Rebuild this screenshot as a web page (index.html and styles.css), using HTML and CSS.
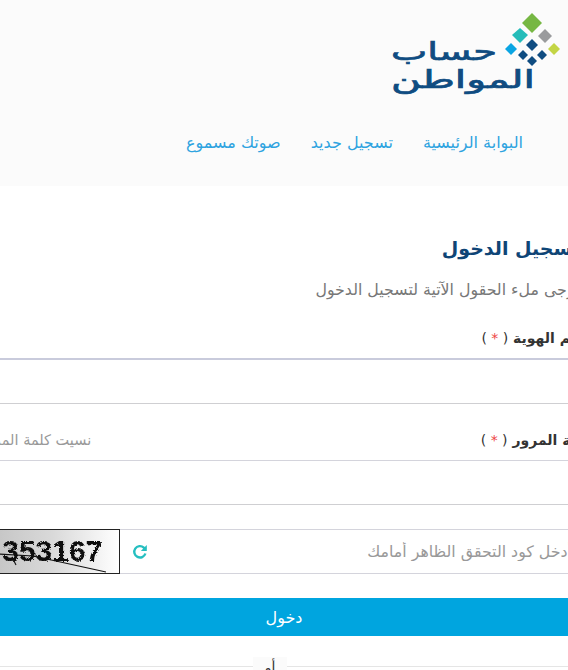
FILE: index.html
```html
<!DOCTYPE html>
<html lang="ar" dir="rtl">

<head>
  <meta charset="UTF-8">
  <meta name="viewport" content="width=device-width, initial-scale=1.0">
  <title>حساب المواطن</title>
  <link rel="stylesheet" href="styles.css">
</head>

<body>
  <header class="site-header">
    <div class="logo_row">
      <svg class="logo" width="172" height="90" viewBox="0 0 172 90">
        <polygon fill="#76b743" points="142,1 152,11 142,21 132,11" />
        <polygon fill="#25bcb9" points="130,16 138,23 130,31 122,23" />
        <polygon fill="#9a9b9d" points="155,17 162,24 155,31 148,24" />
        <polygon fill="#0aa5e3" points="121,31 127,37 121,43 115,37" />
        <polygon fill="#0f4c81" points="142,27 148,33 142,39 136,33" />
        <polygon fill="#c3d545" points="164,31 170,37 164,43 158,37" />
        <polygon fill="#0f4c81" points="133,38 138,43 133,48 128,43" />
        <polygon fill="#0f4c81" points="152,38 157,43 152,48 147,43" />
        <polygon fill="#0f4c81" points="142,44 147,49 142,54 137,49" />
        <text class="logo_text" x="107" y="48" text-anchor="start" textLength="106" lengthAdjust="spacingAndGlyphs">حساب</text>
        <text class="logo_text" x="145" y="76" text-anchor="start" textLength="144" lengthAdjust="spacingAndGlyphs">المواطن</text>
      </svg>
    </div>
    <nav class="main-nav">
      <a href="#">البوابة الرئيسية</a>
      <a href="#">تسجيل جديد</a>
      <a href="#">صوتك مسموع</a>
    </nav>
  </header>

  <main class="login">
    <h1>تسجيل الدخول</h1>
    <p class="hint">يرجى ملء الحقول الآتية لتسجيل الدخول</p>

    <div class="label_row first">
      <label>رقم الهوية <span class="req">( <b>*</b> )</span></label>
    </div>
    <input class="field field_id" type="text">

    <div class="label_row second">
      <label>كلمة المرور <span class="req">( <b>*</b> )</span></label>
      <a class="forgot" href="#">نسيت كلمة المرور؟</a>
    </div>
    <input class="field" type="password">

    <div class="captcha_row">
      <input class="captcha_input" type="text" placeholder="أدخل كود التحقق الظاهر أمامك">
      <span class="refresh">
        <svg width="16" height="16" viewBox="0 0 16 16" fill="none">
          <path d="M13.4 9.5A5.7 5.7 0 1 1 11.8 3.6L13.6 5.4" stroke="#25bfc0" stroke-width="2.4" />
          <path d="M14.8 1V7H8.8Z" fill="#25bfc0" />
        </svg>
      </span>
      <div class="captcha_img">
        <svg width="148" height="43" viewBox="0 0 148 43">
          <defs>
            <linearGradient id="capbg" x1="0" x2="1" y1="0" y2="0">
              <stop offset="0" stop-color="#bdbdbd" />
              <stop offset="0.55" stop-color="#d9d9d9" />
              <stop offset="1" stop-color="#ffffff" />
            </linearGradient>
            <filter id="rough">
              <feTurbulence baseFrequency="0.7" numOctaves="1" seed="3" />
              <feDisplacementMap in="SourceGraphic" scale="1.2" />
            </filter>
          </defs>
          <rect width="148" height="43" fill="url(#capbg)" />
          <text class="captcha_text" x="31" y="31" direction="ltr" filter="url(#rough)">353167</text>
          <path d="M26 24L62 26L135 42" stroke="#111" stroke-width="1.1" fill="none" />
          <path d="M41 27L45 35" stroke="#111" stroke-width="1.1" />
        </svg>
      </div>
    </div>

    <button class="submit" type="button">دخول</button>

    <div class="or_line"><span>أو</span></div>
  </main>
</body>

</html>
```

FILE: styles.css
```css
html,
body {
  margin: 0;
  padding: 0;
  height: 100%;
  overflow: hidden;
  background: #fff;
  font-family: "DejaVu Sans", sans-serif;
}

.site-header {
  height: 186px;
  background: #fbfbfb;
  box-sizing: border-box;
  padding-top: 12px;
}

.logo_row {
  display: flex;
  padding-right: 6px;
  height: 90px;
}

.logo_text {
  font-family: "DejaVu Sans", sans-serif;
  font-size: 25px;
  fill: #0f4c81;
  stroke: #0f4c81;
  stroke-width: 0.7;
}

.main-nav {
  display: flex;
  gap: 30px;
  padding: 30px 45px 0 0;
}

.main-nav a {
  color: #2ea3e0;
  text-decoration: none;
  font-size: 16px;
  line-height: 22px;
}

/* the form is wider than the window on both sides */
.login {
  margin: 0 -28px;
}

.login h1 {
  margin: 47px 0 0;
  padding-right: 16px;
  color: #0f4576;
  font-size: 19px;
  font-weight: bold;
  line-height: 30px;
}

.hint {
  margin: 17px 0 0;
  padding-right: 16px;
  color: #777;
  font-size: 15.8px;
  line-height: 20px;
}

.label_row {
  display: flex;
  justify-content: space-between;
  align-items: center;
  height: 24px;
  margin-top: 24px;
}

.label_row.first {
  margin-top: 26px;
  padding-right: 8px;
}

.label_row.second {
  padding-right: 2px;
}

.label_row label {
  color: #333;
  font-size: 14px;
  font-weight: bold;
}

.req {
  font-weight: normal;
}

.req b {
  color: #ee4444;
  font-weight: normal;
}

.forgot {
  color: #999;
  font-size: 14.5px;
  text-decoration: none;
}

.field {
  display: block;
  width: 100%;
  height: 45px;
  box-sizing: border-box;
  border: 0;
  border-top: 1px solid #d4d4dc;
  border-bottom: 1px solid #cfcfd2;
  background: #fff;
  margin-top: 8px;
  outline: none;
}

.field_id {
  height: 46px;
  border-top: 2px solid #c9cbdc;
}

.captcha_row {
  display: flex;
  height: 45px;
  margin-top: 24px;
  box-sizing: border-box;
  border-top: 1px solid #d4d4dc;
  border-bottom: 1px solid #d4d4dc;
}

.captcha_input {
  flex: 1;
  min-width: 0;
  border: 0;
  outline: none;
  background: transparent;
  font-family: inherit;
  font-size: 15.8px;
  padding: 0 24px 0 0;
}

.captcha_input::placeholder {
  color: #999;
  opacity: 1;
}

.refresh {
  display: flex;
  align-items: center;
  justify-content: center;
  width: 38px;
  flex: none;
  padding-left: 1px;
  box-sizing: border-box;
}

.captcha_img {
  flex: none;
  width: 148px;
  height: 45px;
  margin-top: -1px;
  box-sizing: border-box;
  border: 1px solid #222;
}

.captcha_img svg {
  display: block;
}

.captcha_text {
  font-family: "Liberation Sans", sans-serif;
  font-size: 30px;
  font-weight: bold;
  fill: #111;
}

.submit {
  display: block;
  width: 100%;
  height: 38px;
  margin-top: 24px;
  border: none;
  background: #00a5df;
  color: #fff;
  font-family: inherit;
  font-size: 16px;
}

.or_line {
  position: relative;
  margin-top: 30px;
  border-top: 1px solid #e5e5e5;
}

.or_line span {
  position: absolute;
  top: -10px;
  left: 281px;
  width: 34px;
  height: 24px;
  line-height: 20px;
  background: #fbfbfb;
  color: #333;
  font-size: 14px;
  text-align: center;
}
```
